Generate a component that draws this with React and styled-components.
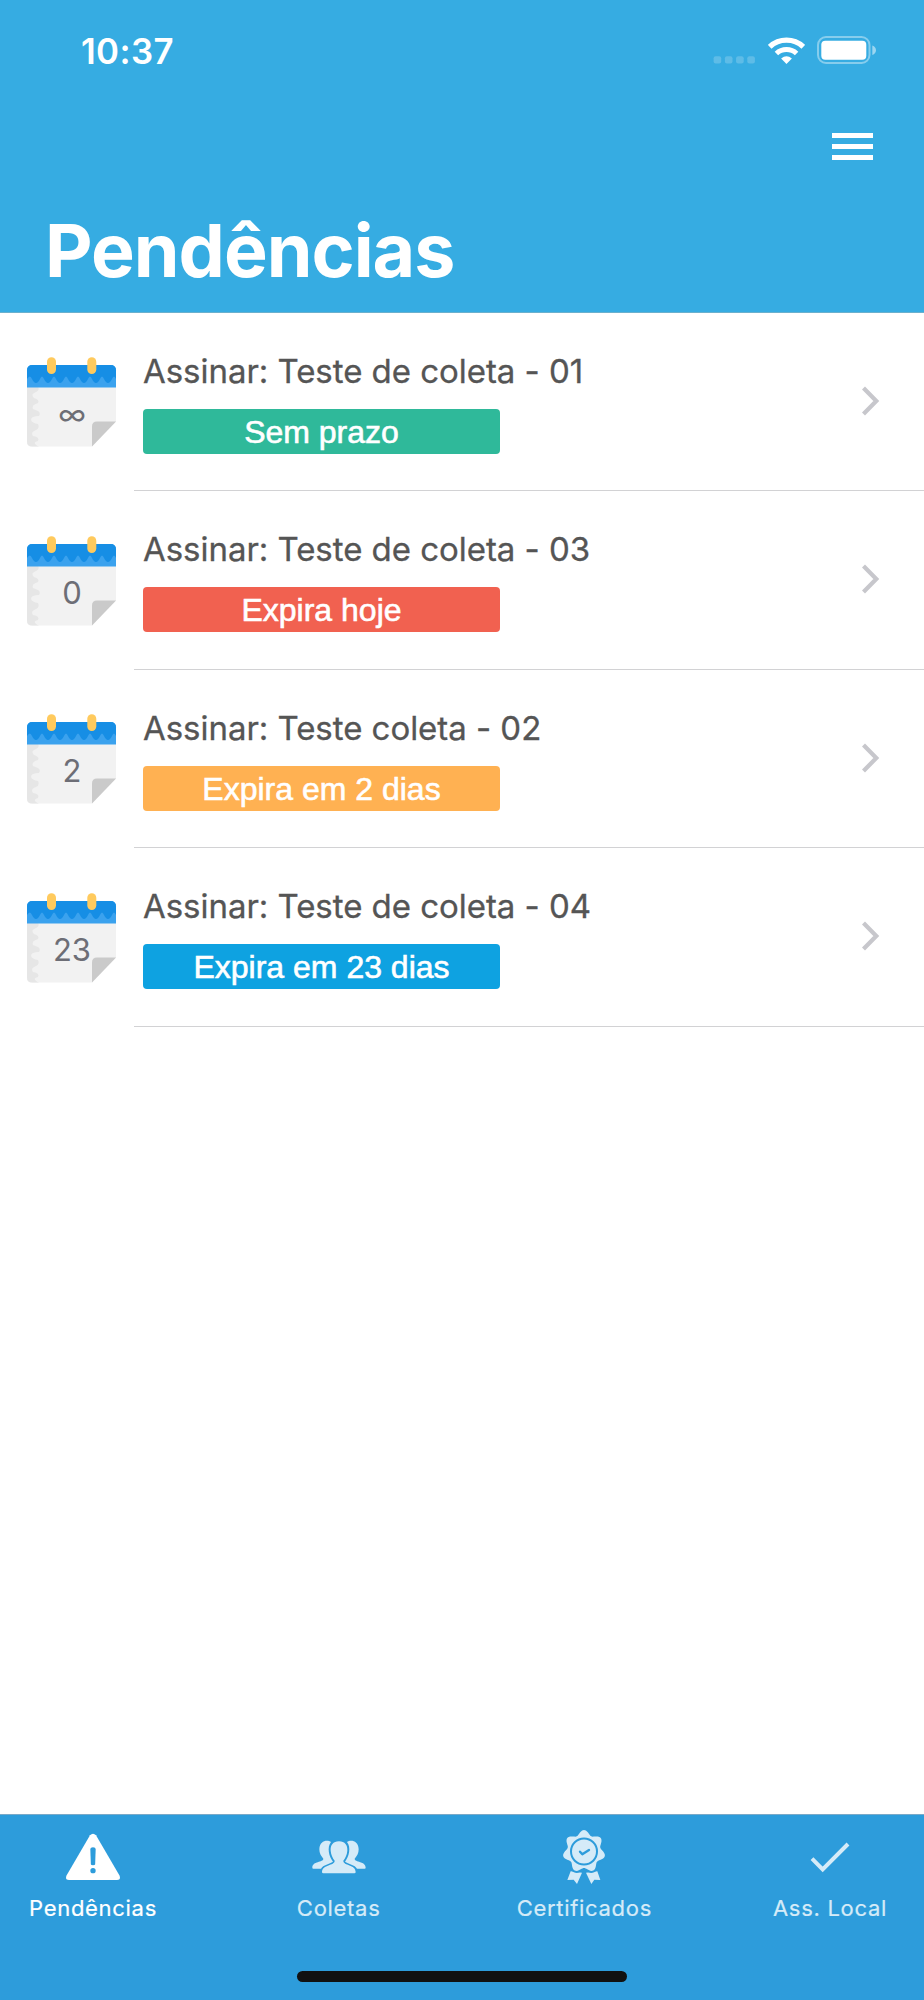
import React from 'react';
import styled, { createGlobalStyle } from 'styled-components';

const GlobalStyle = createGlobalStyle`
  * {
    box-sizing: border-box;
  }

  body {
    margin: 0;
    background: #ffffff;
    font-family: Inter, 'Liberation Sans', sans-serif;
  }
`;

const Screen = styled.div`
  display: flex;
  flex-direction: column;
  width: 924px;
  height: 2000px;
  background: #ffffff;
  overflow: hidden;
`;

const Header = styled.header`
  display: flex;
  flex-direction: column;
  height: 312.5px;
  flex-shrink: 0;
  background: #36ace2;
  border-bottom: 1px solid #6bb0cd;
  color: #ffffff;
`;

const StatusBar = styled.div`
  display: flex;
  justify-content: space-between;
  align-items: flex-start;
  height: 71px;
  padding: 31px 47px 0 81px;
`;

const Time = styled.span`
  font-size: 34.8px;
  font-weight: 600;
  line-height: 40px;
  letter-spacing: 0.4px;
`;

const StatusIcons = styled.div`
  display: flex;
  align-items: flex-end;
  height: 33px;
  gap: 12.5px;
`;

const NavBar = styled.div`
  display: flex;
  justify-content: flex-end;
  height: 136px;
  padding: 62px 51px 0 0;
`;

const MenuButton = styled.button`
  display: flex;
  flex-direction: column;
  gap: 6px;
  width: 41px;
  height: 27px;
  padding: 0;
  border: none;
  background: none;
  cursor: pointer;
`;

const MenuLine = styled.span`
  width: 100%;
  height: 5px;
  background: #ffffff;
`;

const Title = styled.h1`
  margin: 0;
  padding-left: 45px;
  font-size: 73.5px;
  font-weight: 700;
  line-height: 88px;
  letter-spacing: -1px;
`;

const List = styled.ul`
  flex: 1;
  margin: 0;
  padding: 0;
  list-style: none;
`;

const Row = styled.li`
  display: flex;
  height: 178.67px;
  padding-left: 27px;
`;

const DayIcon = styled.div`
  display: grid;
  width: 90px;
  height: 90px;
  margin-top: 44.6px;

  > * {
    grid-area: 1 / 1;
  }
`;

const Day = styled.span`
  padding-top: 37px;
  color: #6d6e76;
  font-size: ${(props) => (props.$symbol ? 29.5 : 31)}px;
  font-weight: 400;
  line-height: 40px;
  text-align: center;
`;

const RowBody = styled.div`
  display: flex;
  flex: 1;
  justify-content: space-between;
  margin-left: 17px;
  padding: 38px 44px 0 9px;
  border-bottom: 1px solid #d2d2d4;
`;

const RowTitle = styled.div`
  color: #555555;
  font-size: 33px;
  line-height: 40px;
  letter-spacing: -0.04px;
  white-space: nowrap;
  -webkit-text-stroke: 0.3px #555555;
`;

const Badge = styled.div`
  width: 357px;
  height: 45px;
  margin-top: 18px;
  padding-top: 1px;
  border-radius: 4px;
  background: ${(props) => props.$color};
  color: #ffffff;
  font-family: 'Liberation Sans', Arial, sans-serif;
  font-size: 32px;
  line-height: 45px;
  text-align: center;
  -webkit-text-stroke: 0.6px #ffffff;
`;

const Chevron = styled.svg`
  margin-top: 35px;
`;

const TabBar = styled.nav`
  display: flex;
  flex-direction: column;
  justify-content: space-between;
  align-items: center;
  height: 186px;
  flex-shrink: 0;
  padding-bottom: 18px;
  border-top: 1px solid #79a9c8;
  background: #2d9cdb;
`;

const Tabs = styled.div`
  display: flex;
  justify-content: space-between;
  width: 100%;
  padding-right: 1px;
`;

const Tab = styled.div`
  display: flex;
  flex-direction: column;
  align-items: center;
  width: 186px;
  padding-top: 13px;
  color: ${(props) => (props.$active ? '#ffffff' : '#d5ebf8')};
`;

const TabLabel = styled.span`
  margin-top: 10px;
  font-size: 22px;
  font-weight: 400;
  line-height: 28px;
  letter-spacing: 0.7px;
  white-space: nowrap;
  -webkit-text-stroke: 0.2px currentColor;
`;

const HomeIndicator = styled.div`
  width: 330px;
  height: 11px;
  border-radius: 6px;
  background: #111111;
`;

const TAB_BLUE = '#2d9cdb';

function CellularDots() {
  return (
    <svg width="42" height="8" viewBox="0 0 42 8" fill="#ffffff" fillOpacity="0.2">
      {[0.6, 11.9, 23.1, 34.3].map((x) => (
        <rect key={x} x={x} y="0.3" width="7.6" height="7.2" rx="2" />
      ))}
    </svg>
  );
}

function Wifi() {
  return (
    <svg width="37" height="27" viewBox="0 0 110 80" fill="none" stroke="#ffffff">
      <path d="M5 29 A73 73 0 0 1 105 29" strokeWidth="16" />
      <path d="M25 49 A44 44 0 0 1 85 49" strokeWidth="15" />
      <path d="M39 64 Q55 50 71 64 L55 80 Z" fill="#ffffff" stroke="none" />
    </svg>
  );
}

function Battery() {
  return (
    <svg width="60" height="28" viewBox="0 0 60 28">
      <rect x="1" y="1" width="51.5" height="26" rx="8" fill="none" stroke="#ffffff" strokeOpacity="0.4" strokeWidth="2" />
      <rect x="4.3" y="4.7" width="45" height="19" rx="4" fill="#ffffff" />
      <path d="M55.3 9.5 Q59 11 59 14.2 Q59 17.5 55.3 19 Z" fill="#ffffff" fillOpacity="0.5" />
    </svg>
  );
}

function Calendar() {
  return (
    <svg width="90" height="90" viewBox="0 0 90 90">
      <path d="M0 28 H89 V64.5 L65 89.5 H5 Q0 89.5 0 84.5 Z" fill="#f2f2f2" />
      <path
        d="M0 30 H11 Q13 33 9 35 Q3 37 7 41 Q13 43 11 46 Q4 48 6 52 L11 54 Q14 56 12 59 Q4 59 4 63 Q5 66 11 67 Q13 71 9 73 Q3 75 6 79 Q13 80 11 84 Q4 86 12 89.5 H5 Q0 89.5 0 84.5 Z"
        fill="#e6e6e6"
      />
      <path d="M0 30.5 V13.5 Q0 8 5.5 8 H83.5 Q89 8 89 13.5 V30.5 Z" fill="#3ba2ee" />
      <path
        d="M0 22 V13.5 Q0 8 5.5 8 H83.5 Q89 8 89 13.5 V22 Q87 17 85 22 Q81 30 77 22 Q75 17 73 22 Q69 30 65 22 Q63 17 61 22 Q57 30 53 22 Q51 17 49 22 Q45 30 41 22 Q39 17 37 22 Q33 30 29 22 Q27 17 25 22 Q21 30 17 22 Q15 17 13 22 Q9 30 5 22 Q3 17 0 22 Z"
        fill="#168ee5"
      />
      <rect x="20" y="0.3" width="9" height="16.7" rx="4.5" fill="#ffca5d" />
      <rect x="60.3" y="0.3" width="9" height="16.7" rx="4.5" fill="#ffca5d" />
      <path d="M65 89.5 V69.5 Q65 64.5 70 64.5 H89 Z" fill="#cacaca" />
    </svg>
  );
}

function WarningIcon() {
  return (
    <svg width="56" height="56" viewBox="0 0 168 168" fill="currentColor">
      <path d="M75 22 Q84 12 93 22 L163 142 Q169 156 156 156 H12 Q-1 156 5 142 Z" />
      <path d="M76 63 Q76 58 84 58 Q92 58 92 63 L90.5 109 Q90 112 84 112 Q78 112 77.5 109 Z" fill={TAB_BLUE} />
      <circle cx="84" cy="128" r="8" fill={TAB_BLUE} />
    </svg>
  );
}

function PeopleIcon() {
  const side =
    'M60 42 C50 35 26 36 25 64 C25 76 30 84 37 92 C37 104 4 98 4 119 Q4 122 7 122 H30 C36 110 56 108 66 101 C54 86 47 58 60 42 Z';

  return (
    <svg width="56" height="56" viewBox="0 0 168 168" fill="currentColor">
      <path d={side} />
      <path d={side} transform="translate(168 0) scale(-1 1)" />
      <path d="M84 40 C102 40 110 52 109 68 C108 80 103 90 97 98 C97 114 134 108 134 132 Q134 136 130 136 H37 Q33 136 33 132 C34 108 71 114 71 98 C65 90 60 80 59 68 C58 52 66 40 84 40 Z" />
    </svg>
  );
}

// rosette outline with seven lobes
const rosette = Array.from({ length: 140 }, (_, i) => {
  const angle = (i / 140) * Math.PI * 2;
  const radius = 57 + 7 * Math.cos(7 * angle);
  return `${(84 + radius * Math.sin(angle)).toFixed(2)},${(70 - radius * Math.cos(angle)).toFixed(2)}`;
}).join(' ');

function CertificateIcon() {
  return (
    <svg width="56" height="56" viewBox="0 0 168 168" fill="currentColor">
      <path d="M44 130 L78 134 L63 168 L53 155 L34 156 Z" />
      <path d="M124 130 L90 134 L106 168 L115 155 L133 156 Z" />
      <polygon points={rosette} stroke={TAB_BLUE} strokeWidth="12" />
      <polygon points={rosette} />
      <circle cx="84" cy="70.5" r="39" fill="none" stroke={TAB_BLUE} strokeWidth="6" />
      <path d="M72 71 L79 79 L99 66" fill="none" stroke={TAB_BLUE} strokeWidth="7" strokeLinecap="round" strokeLinejoin="round" />
    </svg>
  );
}

function CheckIcon() {
  return (
    <svg width="56" height="56" viewBox="0 0 168 168" fill="none" stroke="currentColor" strokeWidth="12">
      <path d="M30 92 L62 124 L138 48" />
    </svg>
  );
}

const items = [
  { day: '∞', title: 'Assinar: Teste de coleta - 01', status: 'Sem prazo', color: '#2fb99a' },
  { day: '0', title: 'Assinar: Teste de coleta - 03', status: 'Expira hoje', color: '#f16150' },
  { day: '2', title: 'Assinar: Teste coleta - 02', status: 'Expira em 2 dias', color: '#ffb152' },
  { day: '23', title: 'Assinar: Teste de coleta - 04', status: 'Expira em 23 dias', color: '#0ea2e1' },
];

const tabs = [
  { label: 'Pendências', Icon: WarningIcon, active: true },
  { label: 'Coletas', Icon: PeopleIcon },
  { label: 'Certificados', Icon: CertificateIcon },
  { label: 'Ass. Local', Icon: CheckIcon },
];

function PendingRow({ item }) {
  return (
    <Row>
      <DayIcon>
        <Calendar />
        <Day $symbol={item.day === '∞'}>{item.day}</Day>
      </DayIcon>
      <RowBody>
        <div>
          <RowTitle>{item.title}</RowTitle>
          <Badge $color={item.color}>{item.status}</Badge>
        </div>
        <Chevron width="18" height="30" viewBox="0 0 18 30" fill="none" stroke="#c7c7cc" strokeWidth="4.2">
          <path d="M1.5 2 L14.3 15 L1.5 28" />
        </Chevron>
      </RowBody>
    </Row>
  );
}

export default function App() {
  return (
    <Screen>
      <GlobalStyle />
      <Header>
        <StatusBar>
          <Time>10:37</Time>
          <StatusIcons>
            <CellularDots />
            <Wifi />
            <Battery />
          </StatusIcons>
        </StatusBar>
        <NavBar>
          <MenuButton aria-label="Menu">
            <MenuLine />
            <MenuLine />
            <MenuLine />
          </MenuButton>
        </NavBar>
        <Title>Pendências</Title>
      </Header>
      <List>
        {items.map((item) => (
          <PendingRow key={item.title} item={item} />
        ))}
      </List>
      <TabBar>
        <Tabs>
          {tabs.map(({ label, Icon, active }) => (
            <Tab key={label} $active={active}>
              <Icon />
              <TabLabel>{label}</TabLabel>
            </Tab>
          ))}
        </Tabs>
        <HomeIndicator />
      </TabBar>
    </Screen>
  );
}
